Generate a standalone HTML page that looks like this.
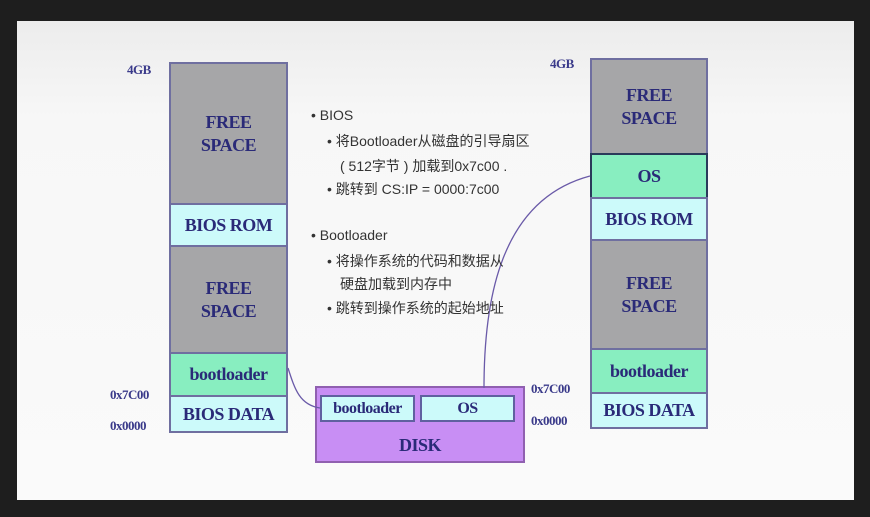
<!DOCTYPE html>
<html><head><meta charset="utf-8"><style>
body{margin:0;width:870px;height:517px;background:#1e1e1e;position:relative;overflow:hidden;font-family:"Liberation Serif",serif}
.slide{position:absolute;left:17px;top:21px;width:837px;height:479px;background:linear-gradient(#ececec,#f7f7f7 20%,#fafafa)}
.b{position:absolute;box-sizing:border-box;border:2px solid #6f6fa0;color:#2a2a78;font-size:18px;font-weight:bold;text-align:center;display:flex;align-items:center;justify-content:center;line-height:23px;letter-spacing:-0.5px}
.g{background:#a6a6a8}.c{background:#ccfafa}.m{background:#88eec0}
.l{position:absolute;color:#3a3a8a;font-size:13px;font-weight:bold;letter-spacing:-0.5px}
.t{position:absolute;font-family:"Liberation Sans","Noto Sans CJK SC",sans-serif;font-size:14px;color:#333;white-space:nowrap}
</style></head><body>
<div class="slide"></div>
<div class="l" style="left:127px;top:62px">4GB</div>
<div class="b g" style="left:169px;top:62px;width:119px;height:143px">FREE<br>SPACE</div>
<div class="b c" style="left:169px;top:203px;width:119px;height:44px">BIOS ROM</div>
<div class="b g" style="left:169px;top:245px;width:119px;height:109px">FREE<br>SPACE</div>
<div class="b m" style="left:169px;top:352px;width:119px;height:45px">bootloader</div>
<div class="b c" style="left:169px;top:395px;width:119px;height:38px">BIOS DATA</div>
<div class="l" style="left:110px;top:387px">0x7C00</div>
<div class="l" style="left:110px;top:418px">0x0000</div>

<div class="l" style="left:550px;top:56px">4GB</div>
<div class="b g" style="left:590px;top:58px;width:118px;height:97px">FREE<br>SPACE</div>
<div class="b m" style="left:590px;top:153px;width:118px;height:46px;border-color:#2a3a5a">OS</div>
<div class="b c" style="left:590px;top:197px;width:118px;height:44px">BIOS ROM</div>
<div class="b g" style="left:590px;top:239px;width:118px;height:111px">FREE<br>SPACE</div>
<div class="b m" style="left:590px;top:348px;width:118px;height:46px">bootloader</div>
<div class="b c" style="left:590px;top:392px;width:118px;height:37px">BIOS DATA</div>
<div class="l" style="left:531px;top:381px">0x7C00</div>
<div class="l" style="left:531px;top:413px">0x0000</div>

<div class="b" style="left:315px;top:386px;width:210px;height:77px;background:#c88ef4;border-color:#9060b0;align-items:flex-end;padding-bottom:4px">DISK</div>
<div class="b c" style="left:320px;top:395px;width:95px;height:27px;border-color:#6060a0;font-size:16px">bootloader</div>
<div class="b c" style="left:420px;top:395px;width:95px;height:27px;border-color:#6060a0;font-size:16px">OS</div>

<svg style="position:absolute;left:0;top:0" width="870" height="517">
<path d="M484 388 C484 300 500 200 590 176" fill="none" stroke="#6a5aa8" stroke-width="1.3"/>
<path d="M320 408 C300 405 295 390 288 368" fill="none" stroke="#6a5aa8" stroke-width="1.3"/>
</svg>

<div class="t" style="left:311px;top:107px">• BIOS</div>
<div class="t" style="left:327px;top:131px">• 将Bootloader从磁盘的引导扇区</div>
<div class="t" style="left:340px;top:156px">( 512字节 ) 加载到0x7c00 .</div>
<div class="t" style="left:327px;top:179px">• 跳转到 CS:IP = 0000:7c00</div>
<div class="t" style="left:311px;top:227px">• Bootloader</div>
<div class="t" style="left:327px;top:251px">• 将操作系统的代码和数据从</div>
<div class="t" style="left:340px;top:274px">硬盘加载到内存中</div>
<div class="t" style="left:327px;top:298px">• 跳转到操作系统的起始地址</div>
</body></html>
